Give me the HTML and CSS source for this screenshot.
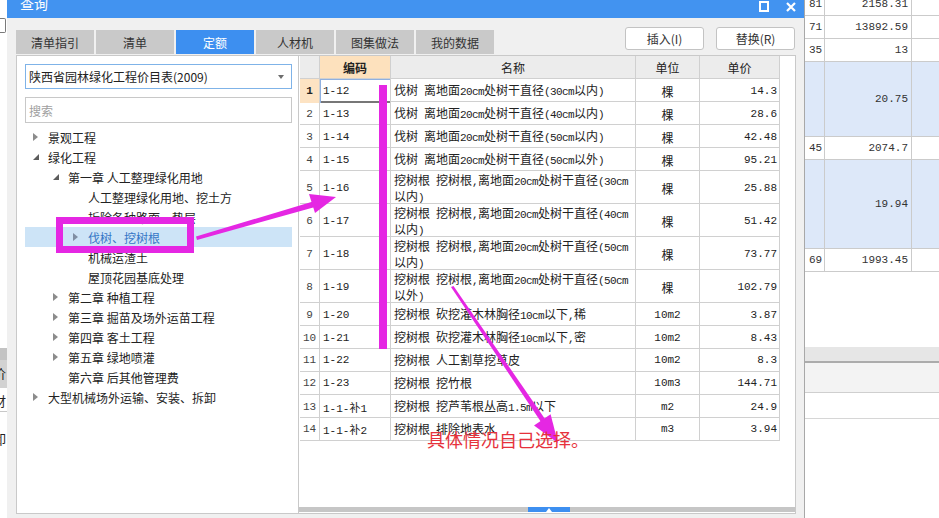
FILE: index.html
```html
<!DOCTYPE html>
<html lang="zh-CN">
<head>
<meta charset="utf-8">
<title>查询</title>
<link rel="stylesheet" href="styles.css">
</head>
<body>
<div class="app">
  <div class="app-left">
    <div class="al-box"></div>
    <div class="al-band1"></div>
    <div class="al-band2"><span class="clip">价</span></div>
    <div class="al-row"><span class="clip">財</span></div>
    <div class="al-row2"><span class="clip">卸</span></div>
  </div>
  <div class="app-mid"></div>
  <div class="app-right">
    <div class="bg-row first"><span class="n">81</span><span class="v">2158.31</span><span class="e"></span></div>
    <div class="bg-row"><span class="n">71</span><span class="v">13892.59</span><span class="e"></span></div>
    <div class="bg-row"><span class="n">35</span><span class="v">13</span><span class="e"></span></div>
    <div class="bg-row blue h75"><span class="n"></span><span class="v">20.75</span><span class="e"></span></div>
    <div class="bg-row"><span class="n">45</span><span class="v">2074.7</span><span class="e"></span></div>
    <div class="bg-row blue h89"><span class="n"></span><span class="v">19.94</span><span class="e"></span></div>
    <div class="bg-row"><span class="n">69</span><span class="v">1993.45</span><span class="e"></span></div>
    <div class="bg-gap"></div>
    <div class="bg-band1"></div>
    <div class="bg-band2"></div>
    <div class="bg-band3"></div>
  </div>
</div>

<div class="dialog">
  <div class="titlebar">
    <span class="title-text">查询</span>
    <svg class="ic-restore" width="10" height="12" viewBox="0 0 10 12"><rect x="1" y="1" width="8" height="9" fill="none" stroke="#fff" stroke-width="2"/></svg>
    <svg class="ic-close" width="10" height="10" viewBox="0 0 10 10"><path d="M1 1L9 9M9 1L1 9" stroke="#fff" stroke-width="2.2" fill="none"/></svg>
  </div>
  <div class="toolbar">
    <div class="tabs">
      <div class="tab">清单指引</div>
      <div class="tab">清单</div>
      <div class="tab active">定额</div>
      <div class="tab">人材机</div>
      <div class="tab">图集做法</div>
      <div class="tab">我的数据</div>
    </div>
    <div class="actions">
      <div class="btn">插入(I)</div>
      <div class="btn">替换(R)</div>
    </div>
  </div>
  <div class="content">
    <div class="leftpane">
      <div class="select">
        <span>陕西省园林绿化工程价目表(2009)</span>
        <svg width="6" height="4" viewBox="0 0 6 4"><path d="M0 0H6L3 4Z" fill="#6d6d6d"/></svg>
      </div>
      <div class="search">搜索</div>
      <div class="tree">
        <div class="node l0"><span class="tw"><svg width="5" height="8" viewBox="0 0 5 8"><path d="M0 0L5 4L0 8Z" fill="#8c8c8c"/></svg></span>景观工程</div>
        <div class="node l0"><span class="tw"><svg width="6" height="6" viewBox="0 0 6 6"><path d="M6 0V6H0Z" fill="#5c5c5c"/></svg></span>绿化工程</div>
        <div class="node l1"><span class="tw"><svg width="6" height="6" viewBox="0 0 6 6"><path d="M6 0V6H0Z" fill="#5c5c5c"/></svg></span>第一章 人工整理绿化用地</div>
        <div class="node l2"><span class="tw"></span>人工整理绿化用地、挖土方</div>
        <div class="node l2"><span class="tw"></span>拆除各种路面、垫层</div>
        <div class="node l2 sel"><span class="tw"><svg width="5" height="8" viewBox="0 0 5 8"><path d="M0 0L5 4L0 8Z" fill="#7f8ea3"/></svg></span>伐树、挖树根</div>
        <div class="node l2"><span class="tw"></span>机械运渣土</div>
        <div class="node l2"><span class="tw"></span>屋顶花园基底处理</div>
        <div class="node l1"><span class="tw"><svg width="5" height="8" viewBox="0 0 5 8"><path d="M0 0L5 4L0 8Z" fill="#8c8c8c"/></svg></span>第二章 种植工程</div>
        <div class="node l1"><span class="tw"><svg width="5" height="8" viewBox="0 0 5 8"><path d="M0 0L5 4L0 8Z" fill="#8c8c8c"/></svg></span>第三章 掘苗及场外运苗工程</div>
        <div class="node l1"><span class="tw"><svg width="5" height="8" viewBox="0 0 5 8"><path d="M0 0L5 4L0 8Z" fill="#8c8c8c"/></svg></span>第四章 客土工程</div>
        <div class="node l1"><span class="tw"><svg width="5" height="8" viewBox="0 0 5 8"><path d="M0 0L5 4L0 8Z" fill="#8c8c8c"/></svg></span>第五章 绿地喷灌</div>
        <div class="node l1"><span class="tw"></span>第六章 后其他管理费</div>
        <div class="node l0"><span class="tw"><svg width="5" height="8" viewBox="0 0 5 8"><path d="M0 0L5 4L0 8Z" fill="#8c8c8c"/></svg></span>大型机械场外运输、安装、拆卸</div>
      </div>
    </div>
    <div class="rightpane">
      <div class="grid">
        <div class="trow thead"><div class="rn"></div><div class="hc hsel">编码</div><div class="hc">名称</div><div class="hc">单位</div><div class="hc">单价</div></div>
        <div class="trow"><div class="rn rsel">1</div><div class="code focus">1-12</div><div class="name">伐树&ensp;离地面<span class="lt">20cm</span>处树干直径<span class="lt">(30cm</span>以内<span class="lt">)</span></div><div class="unit">棵</div><div class="price">14.3</div></div>
        <div class="trow"><div class="rn">2</div><div class="code">1-13</div><div class="name">伐树&ensp;离地面<span class="lt">20cm</span>处树干直径<span class="lt">(40cm</span>以内<span class="lt">)</span></div><div class="unit">棵</div><div class="price">28.6</div></div>
        <div class="trow"><div class="rn">3</div><div class="code">1-14</div><div class="name">伐树&ensp;离地面<span class="lt">20cm</span>处树干直径<span class="lt">(50cm</span>以内<span class="lt">)</span></div><div class="unit">棵</div><div class="price">42.48</div></div>
        <div class="trow"><div class="rn">4</div><div class="code">1-15</div><div class="name">伐树&ensp;离地面<span class="lt">20cm</span>处树干直径<span class="lt">(50cm</span>以外<span class="lt">)</span></div><div class="unit">棵</div><div class="price">95.21</div></div>
        <div class="trow tall"><div class="rn">5</div><div class="code">1-16</div><div class="name">挖树根&ensp;挖树根<span class="lt">,</span>离地面<span class="lt">20cm</span>处树干直径<span class="lt">(30cm</span><br>以内<span class="lt">)</span></div><div class="unit">棵</div><div class="price">25.88</div></div>
        <div class="trow tall"><div class="rn">6</div><div class="code">1-17</div><div class="name">挖树根&ensp;挖树根<span class="lt">,</span>离地面<span class="lt">20cm</span>处树干直径<span class="lt">(40cm</span><br>以内<span class="lt">)</span></div><div class="unit">棵</div><div class="price">51.42</div></div>
        <div class="trow tall"><div class="rn">7</div><div class="code">1-18</div><div class="name">挖树根&ensp;挖树根<span class="lt">,</span>离地面<span class="lt">20cm</span>处树干直径<span class="lt">(50cm</span><br>以内<span class="lt">)</span></div><div class="unit">棵</div><div class="price">73.77</div></div>
        <div class="trow tall"><div class="rn">8</div><div class="code">1-19</div><div class="name">挖树根&ensp;挖树根<span class="lt">,</span>离地面<span class="lt">20cm</span>处树干直径<span class="lt">(50cm</span><br>以外<span class="lt">)</span></div><div class="unit">棵</div><div class="price">102.79</div></div>
        <div class="trow"><div class="rn">9</div><div class="code">1-20</div><div class="name">挖树根&ensp;砍挖灌木林胸径<span class="lt">10cm</span>以下<span class="lt">,</span>稀</div><div class="unit lt2">10m2</div><div class="price">3.87</div></div>
        <div class="trow"><div class="rn">10</div><div class="code">1-21</div><div class="name">挖树根&ensp;砍挖灌木林胸径<span class="lt">10cm</span>以下<span class="lt">,</span>密</div><div class="unit lt2">10m2</div><div class="price">8.43</div></div>
        <div class="trow"><div class="rn">11</div><div class="code">1-22</div><div class="name">挖树根&ensp;人工割草挖草皮</div><div class="unit lt2">10m2</div><div class="price">8.3</div></div>
        <div class="trow"><div class="rn">12</div><div class="code">1-23</div><div class="name">挖树根&ensp;挖竹根</div><div class="unit lt2">10m3</div><div class="price">144.71</div></div>
        <div class="trow"><div class="rn">13</div><div class="code">1-1-补1</div><div class="name">挖树根&ensp;挖芦苇根丛高<span class="lt">1.5m</span>以下</div><div class="unit lt2">m2</div><div class="price">24.9</div></div>
        <div class="trow"><div class="rn">14</div><div class="code">1-1-补2</div><div class="name">挖树根&ensp;排除地表水</div><div class="unit lt2">m3</div><div class="price">3.94</div></div>
      </div>
      <div class="filler"></div>
      <div class="hscroll"><div class="thumb"><svg width="6" height="4" viewBox="0 0 6 4"><path d="M3 0L6 4H0Z" fill="#fff"/></svg></div></div>
    </div>
  </div>
</div>

<svg class="annot" width="939" height="518" viewBox="0 0 939 518">
  <rect x="59.5" y="220.5" width="131" height="29" fill="none" stroke="#e527e3" stroke-width="7"/>
  <path d="M196 236.5L313 201.5L315 207L197 240Z" fill="#e527e3"/>
  <path d="M336 197L309 194L315 213Z" fill="#e527e3"/>
  <rect x="379" y="85" width="8" height="264" fill="#e527e3"/>
  <path d="M451 287L453.5 286L545 419L541 422Z" fill="#e527e3"/>
  <path d="M558 443L550.6 414.2L534 425.4Z" fill="#e527e3"/>
</svg>
<div class="note">具体情况自己选择。</div>
</body>
</html>
```

FILE: styles.css
```css
* { box-sizing: border-box; }
html, body { margin: 0; padding: 0; }
body {
  width: 939px;
  height: 518px;
  overflow: hidden;
  position: relative;
  background: #fff;
  font-family: "Noto Sans CJK SC", "Noto Sans", sans-serif;
  font-size: 12px;
  color: #333;
}

/* background application */
.app { display: flex; height: 518px; }
.app-left { width: 7px; display: flex; flex-direction: column; overflow: hidden; background: #fff; }
.app-mid { flex: 1; }
.app-right { width: 134px; display: flex; flex-direction: column; overflow: hidden; background: #fff; }

.al-box { margin-top: 18px; width: 6px; height: 15px; border: 1px solid #7a7a7a; border-left: none; border-radius: 0 2px 2px 0; }
.al-band1 { margin-top: 315px; height: 12px; background: #c3c3c3; }
.al-band2 { height: 28px; background: #d2d2d2; overflow: hidden; }
.al-row { height: 24px; border-bottom: 1px solid #c8c8c8; overflow: hidden; }
.al-row2 { height: 40px; overflow: hidden; }
.clip { display: block; margin-left: -7px; font-size: 13px; line-height: 26px; color: #222; }
.al-row2 .clip { line-height: 54px; }

.bg-row {
  display: grid;
  grid-template-columns: 20px 87px 27px;
  height: 23px;
  border-bottom: 1px solid #cbcbcb;
  flex-shrink: 0;
}
.bg-row.first { margin-top: -7px; }
.bg-row.blue { background: #dde8f9; }
.bg-row.h75 { height: 75px; }
.bg-row.h89 { height: 89px; }
.bg-row > span {
  display: flex;
  align-items: center;
  border-right: 1px solid #cbcbcb;
  font-family: "Liberation Mono", monospace;
  font-size: 11px;
  color: #333;
}
.bg-row .n { padding-left: 4px; }
.bg-row .v { justify-content: flex-end; padding-right: 3px; }
.bg-row .e { border-right: none; }
.bg-gap { height: 75px; flex-shrink: 0; }
.bg-band1 { height: 16px; background: #e6e6e6; border-bottom: 2px solid #ababab; flex-shrink: 0; }
.bg-band2 { height: 30px; background: #f3f3f3; border-bottom: 1px solid #cfcfcf; flex-shrink: 0; }
.bg-band3 { height: 26px; border-bottom: 1px solid #d6d6d6; flex-shrink: 0; }

/* dialog window */
.dialog {
  position: absolute;
  left: 7px;
  top: 0;
  width: 798px;
  height: 530px;
  background: #f0f0f0;
  border-right: 1px solid #a8a8a8;
  display: flex;
  flex-direction: column;
}
.titlebar {
  height: 18px;
  background: #4293f0;
  display: flex;
  align-items: flex-start;
  padding-left: 13px;
  padding-right: 8px;
  color: #fff;
  flex-shrink: 0;
}
.title-text { font-size: 14px; line-height: 18px; margin-top: -6px; }
.ic-restore { margin-left: auto; margin-top: 1px; }
.ic-close { margin-left: 17px; margin-top: 2px; }

.toolbar {
  height: 37px;
  display: flex;
  padding: 0 9px;
  flex-shrink: 0;
}
.tabs { display: flex; gap: 2px; align-self: flex-end; margin-bottom: 1px; }
.tab {
  width: 78px;
  height: 24px;
  background: #c9c9c9;
  color: #333;
  display: flex;
  align-items: center;
  justify-content: center;
  font-size: 12px;
}
.tab.active { background: #3d8ff0; color: #fff; }
.actions { margin-left: auto; margin-top: 9px; display: flex; gap: 12px; align-self: flex-start; }
.btn {
  width: 79px;
  height: 23px;
  background: #fff;
  border: 1px solid #c3c3c3;
  border-radius: 3px;
  display: flex;
  align-items: center;
  justify-content: center;
  color: #333;
  font-size: 12px;
}

.content {
  margin-left: 9px;
  width: 780px;
  height: 459px;
  border: 1px solid #c9c9c9;
  background: #fff;
  display: flex;
  flex-shrink: 0;
}

/* left tree pane */
.leftpane {
  width: 282px;
  border-right: 1px solid #c9c9c9;
  padding: 8px 6px 0 8px;
  display: flex;
  flex-direction: column;
}
.select {
  height: 25px;
  border: 1px solid #7fb3e8;
  display: flex;
  align-items: center;
  padding: 0 7px 0 3px;
  color: #222;
  font-size: 12px;
}
.select svg { margin-left: auto; }
.search {
  margin-top: 8px;
  height: 26px;
  border: 1px solid #c8c8c8;
  display: flex;
  align-items: center;
  padding-left: 3px;
  color: #a0a0a0;
  font-size: 12px;
}
.tree { margin-top: 4px; display: flex; flex-direction: column; }
.node {
  height: 20px;
  display: flex;
  align-items: center;
  white-space: nowrap;
  color: #222;
  font-size: 12px;
}
.node .tw { width: 15px; height: 20px; display: flex; align-items: center; flex-shrink: 0; }
.l0 { padding-left: 8px; }
.l1 { padding-left: 28px; }
.l2 { padding-left: 48px; }
.node.sel { background: #cde4f7; color: #3576c6; }

/* right grid pane */
.rightpane { flex: 1; display: flex; flex-direction: column; }
.grid { margin-left: 1px; width: 480px; display: flex; flex-direction: column; }
.trow {
  display: grid;
  grid-template-columns: 20px 71px 245px 64px 80px;
  height: 23px;
  border-bottom: 1px solid #d0d0d0;
  flex-shrink: 0;
}
.trow > div {
  border-right: 1px solid #d0d0d0;
  display: flex;
  align-items: center;
  white-space: nowrap;
}
.trow.tall { height: 33px; }
.thead { background: #ececec; }
.hc { justify-content: center; color: #222; font-size: 12px; }
.hsel { background: #fde1bd; font-weight: bold; }
.rn {
  justify-content: center;
  font-family: "Liberation Mono", monospace;
  font-size: 11px;
  color: #444;
}
.rsel { background: #fde3c3; font-weight: bold; color: #222; }
.code {
  padding-left: 3px;
  font-family: "Liberation Mono", "Noto Sans CJK SC", monospace;
  font-size: 11px;
  color: #222;
}
.focus { box-shadow: inset 1px 1px 0 #8fb0e0, inset 0 -2px 0 #777; }
.trow > .name { display: block; padding: 0 0 0 3px; font-size: 12px; line-height: 14px; color: #222; }
.trow:not(.tall) > .name { line-height: 22px; }
.trow.tall > .name { padding-top: 2px; }
.lt { font-family: "Liberation Mono", monospace; font-size: 11px; letter-spacing: -0.6px; }
.unit { justify-content: center; font-size: 12px; color: #222; }
.unit.lt2 { font-family: "Liberation Mono", monospace; font-size: 11px; }
.price {
  justify-content: flex-end;
  padding-right: 2px;
  font-family: "Liberation Mono", monospace;
  font-size: 11px;
  color: #222;
}
.filler { flex: 1; }
.hscroll { height: 5px; background: #c6c6c6; display: flex; flex-shrink: 0; margin-bottom: 1px; }
.thumb {
  margin-left: 229px;
  width: 42px;
  background: #3d8ff0;
  display: flex;
  align-items: center;
  justify-content: center;
}

/* annotations drawn over the screenshot */
.annot { position: absolute; left: 0; top: 0; pointer-events: none; }
.note {
  position: absolute;
  left: 427px;
  top: 429px;
  font-size: 18px;
  line-height: 20px;
  color: #e6323c;
  white-space: nowrap;
}
```
